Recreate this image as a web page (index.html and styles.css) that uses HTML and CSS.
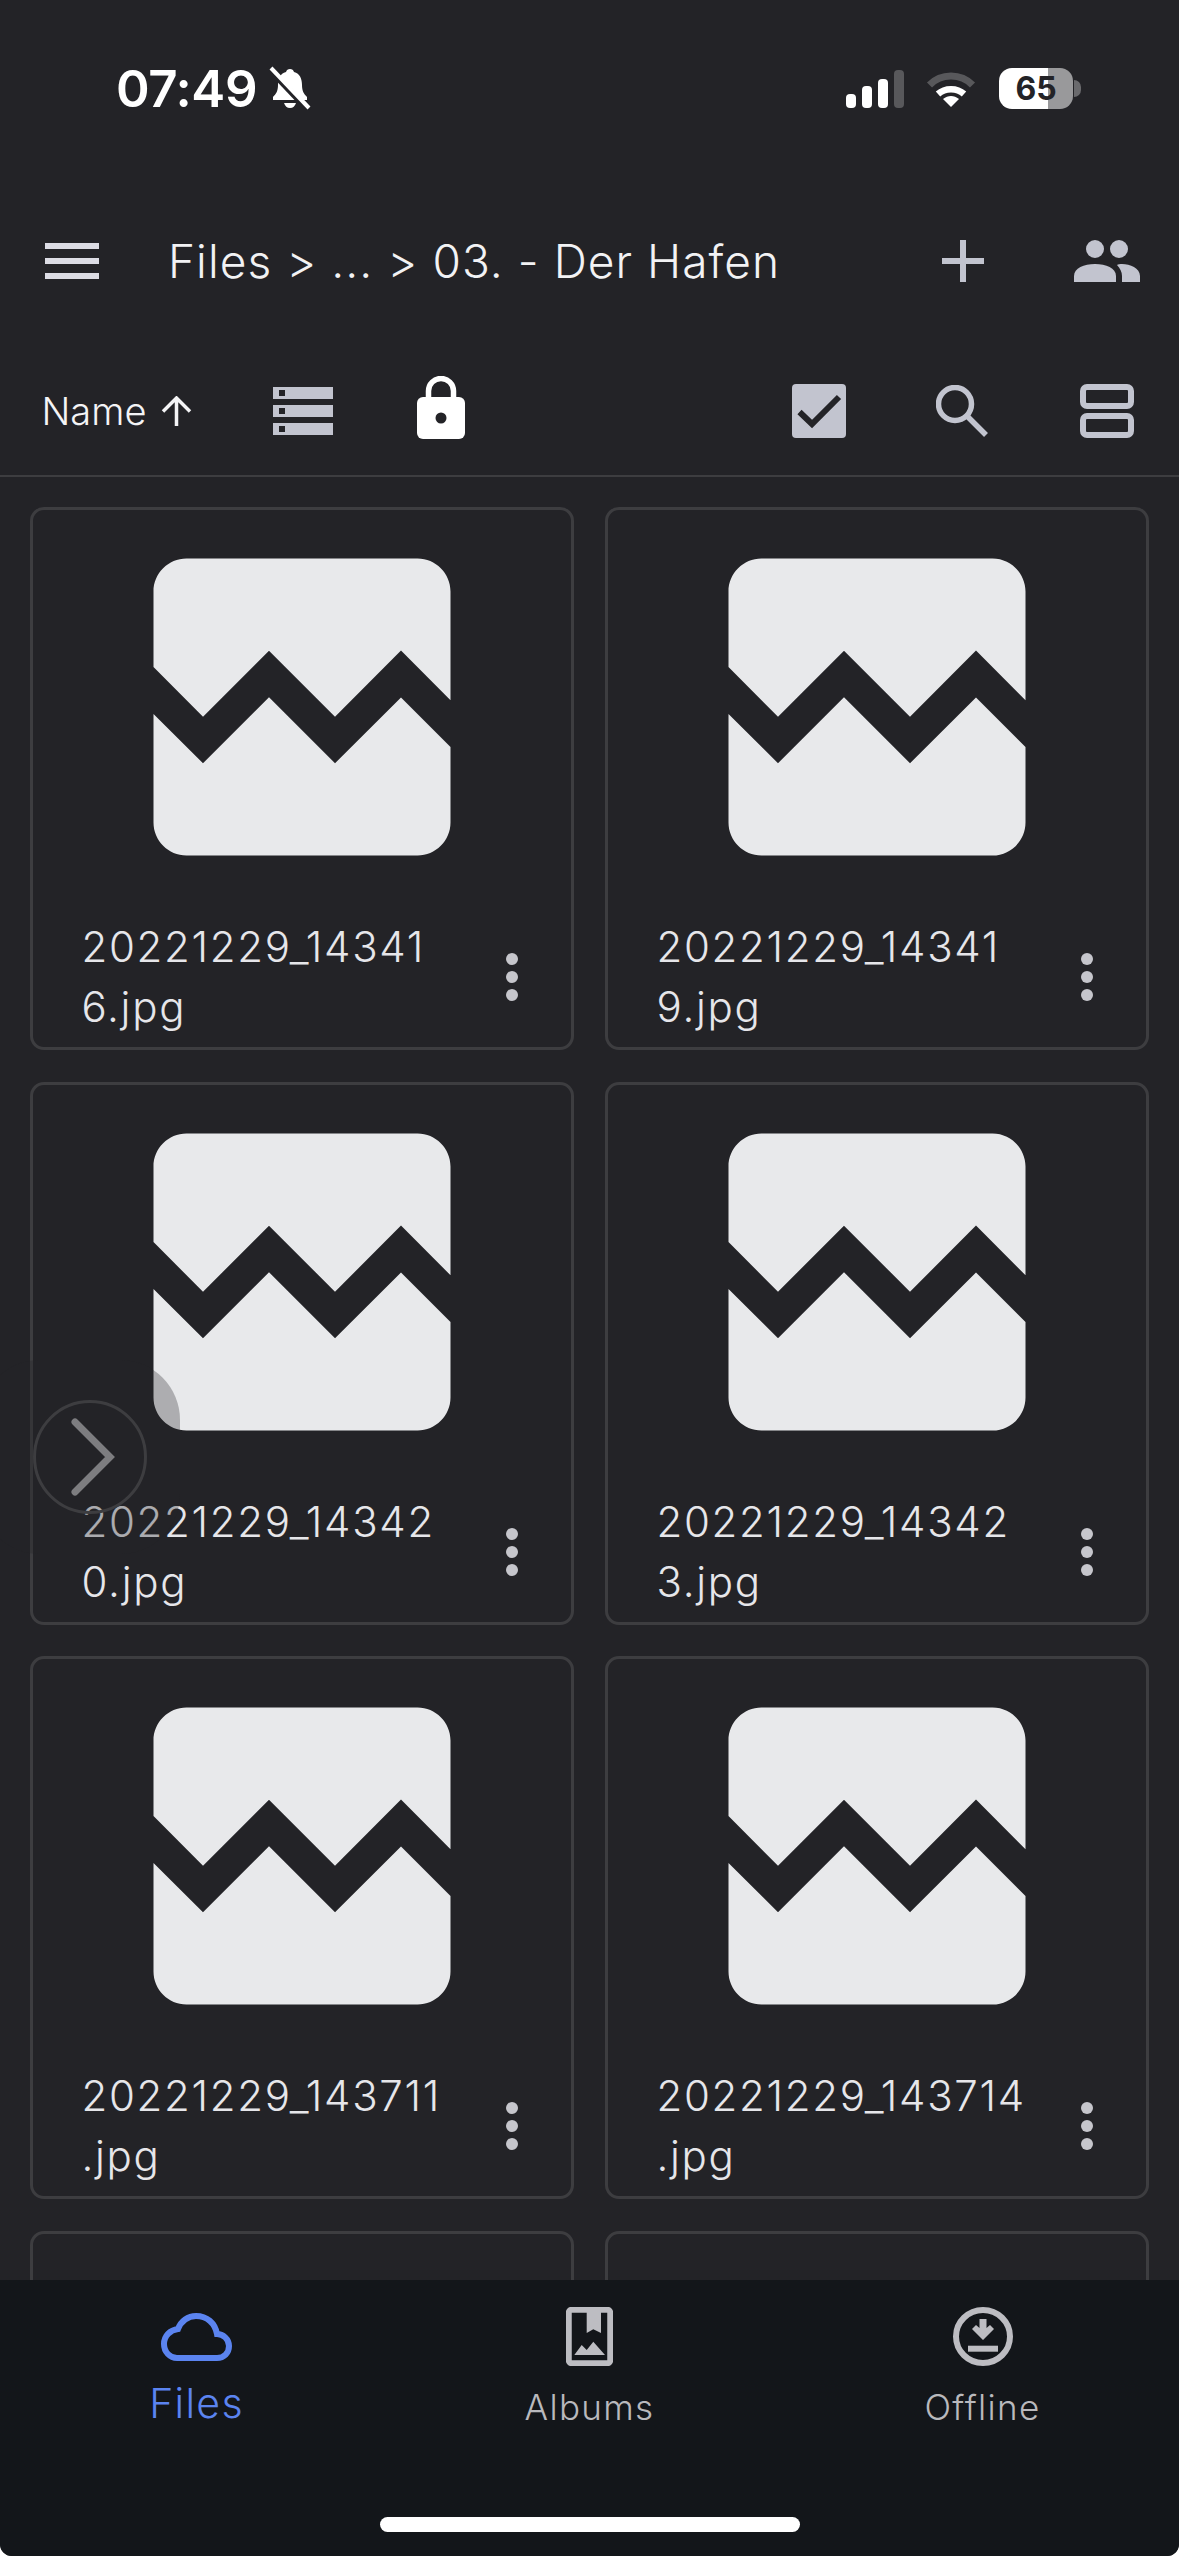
FILE: index.html
```html
<!DOCTYPE html>
<html lang="en">
<head>
<meta charset="utf-8">
<title>Files</title>
<link rel="stylesheet" href="styles.css">
</head>
<body>
<svg class="defs" width="0" height="0" aria-hidden="true">
  <symbol id="broken" viewBox="0 0 24 24"><path d="M21 5v6.59l-3-3.01-4 4.01-4-4-4 4-3-3.01V5c0-1.1.9-2 2-2h14c1.1 0 2 .9 2 2zm-3 6.42l3 3.01V19c0 1.1-.9 2-2 2H5c-1.1 0-2-.9-2-2v-6.58l3 2.99 4-4 4 4 4-3.99z"/></symbol>
</svg>
<div class="app">
  <div class="status">
    <div class="status-left">
      <span class="time">07:49</span>
      <svg class="bell" viewBox="0 0 44 46"><path class="w" d="M22 3c-2 0-3.500 1-4 3C12 7.500 10 13 10 19c0 6-2 9-5 12v3h34v-3c-3-3-5-6-5-12 0-6-2-11.500-8-13-.5-2-2-3-4-3z"/><path class="w" d="M16 37h12c-1 3-3 5-6 5s-5-2-6-5z"/><path class="cut" d="M3 5l38 40"/><path class="slash" d="M3 2l38 40"/></svg>
    </div>
    <div class="status-right">
      <svg class="signal" viewBox="0 0 58 38"><rect class="w" x="0" y="24" width="10" height="14" rx="4"/><rect class="w" x="16" y="16" width="10" height="22" rx="4"/><rect class="w" x="32" y="9" width="10" height="29" rx="4"/><rect class="dim" x="48" y="0" width="10" height="38" rx="4"/></svg>
      <svg class="wifi" viewBox="0 0 50 38"><path class="wifi-outer" d="M3.500 15C15 3 35 3 46.500 15"/><path class="wifi-mid" d="M12 24c7-6.500 19-6.500 26 0"/><path class="w" d="M25 37l-8-8c5-4 11-4 16 0z"/></svg>
      <div class="battery"><span class="battery-level">65</span><span class="battery-nub"></span></div>
    </div>
  </div>

  <div class="header">
    <div class="menu"><span></span><span></span><span></span></div>
    <div class="title">Files &gt; ... &gt; 03. - Der Hafen</div>
    <svg class="plus" viewBox="0 0 42 42"><path d="M21 0v42M0 21h42"/></svg>
    <svg class="people" viewBox="0 0 66 42"><circle cx="21" cy="9" r="9"/><circle cx="45" cy="9" r="9"/><path d="M0 42v-6c0-8 10-12 21-12s21 4 21 12v6z"/><path d="M48 42v-6c0-4-2-8-5-11 1-.6 3-1 5-1 8 0 18 4 18 12v6z"/></svg>
  </div>

  <div class="toolbar">
    <span class="sort">Name</span>
    <svg class="arrow" viewBox="0 0 31 30"><path d="M15.500 30V2M2 15.500L15.500 2 29 15.500"/></svg>
    <svg class="storage" viewBox="0 0 60 48"><path d="M0 0h60v12H0zM0 18h60v12H0zM0 36h60v12H0z"/><path class="hole" d="M6 3h6v6H6zM6 21h6v6H6zM6 39h6v6H6z"/></svg>
    <svg class="lock" viewBox="0 0 48 63"><path class="shackle" d="M11.500 24V15a12.500 12.500 0 0 1 25 0v9"/><rect class="w" x="0" y="21" width="48" height="42" rx="6"/><circle class="hole" cx="24" cy="42" r="5.500"/></svg>
    <svg class="check" viewBox="0 0 54 54"><rect width="54" height="54" rx="4"/><path class="tick" d="M7.500 28L20 40 47 13"/></svg>
    <svg class="search" viewBox="0 0 52 52"><circle cx="19" cy="19" r="16.500"/><path d="M31 31l19 19"/></svg>
    <svg class="view" viewBox="0 0 54 54"><rect x="3" y="3" width="48" height="19" rx="4"/><rect x="3" y="32" width="48" height="19" rx="4"/></svg>
  </div>

  <div class="grid">
    <div class="card"><svg class="thumb"><use href="#broken"/></svg><div class="meta"><div class="name">20221229_14341<br>6.jpg</div><div class="kebab"><span></span><span></span><span></span></div></div></div>
    <div class="card"><svg class="thumb"><use href="#broken"/></svg><div class="meta"><div class="name">20221229_14341<br>9.jpg</div><div class="kebab"><span></span><span></span><span></span></div></div></div>
    <div class="card"><svg class="thumb"><use href="#broken"/></svg><div class="meta"><div class="name">20221229_14342<br>0.jpg</div><div class="kebab"><span></span><span></span><span></span></div></div></div>
    <div class="card"><svg class="thumb"><use href="#broken"/></svg><div class="meta"><div class="name">20221229_14342<br>3.jpg</div><div class="kebab"><span></span><span></span><span></span></div></div></div>
    <div class="card"><svg class="thumb"><use href="#broken"/></svg><div class="meta"><div class="name">20221229_143711<br>.jpg</div><div class="kebab"><span></span><span></span><span></span></div></div></div>
    <div class="card"><svg class="thumb"><use href="#broken"/></svg><div class="meta"><div class="name">20221229_143714<br>.jpg</div><div class="kebab"><span></span><span></span><span></span></div></div></div>
    <div class="card"></div>
    <div class="card"></div>
  </div>

  <nav class="nav">
    <div class="tabs">
      <div class="tab tab-active">
        <svg class="cloud" viewBox="0 0 71 48"><path d="M16 45h40c7 0 12-5 12-12s-6-12-12-12C54 10 46 3 35 3c-8 0-15 5-18 13C9 17 3 23 3 31c0 8 6 14 13 14z"/></svg>
        <span class="tab-label">Files</span>
      </div>
      <div class="tab">
        <svg class="tab-icon album" viewBox="0 0 47 59"><rect class="frame" x="2.750" y="2.750" width="41.500" height="53.500" rx="3"/><path d="M20.700 4h14.300v22l-7.700-3.700-6.600 3.700z"/><path d="M8.300 48l7.400-10 5 5 6.600-8.300L39 48z"/></svg>
        <span class="tab-label">Albums</span>
      </div>
      <div class="tab">
        <svg class="tab-icon offline" viewBox="0 0 60 59"><ellipse class="frame" cx="30" cy="29.500" rx="27" ry="26.500"/><path d="M26.500 12h7v9l3.500-3 4 4-11 11-11-11 4-4 3.500 3z"/><path d="M15 38.700h30v6H15z"/></svg>
        <span class="tab-label">Offline</span>
      </div>
    </div>
    <div class="home-bar"></div>
  </nav>

  <div class="fab-shade"></div>
  <div class="fab">
    <svg class="fab-chevron" viewBox="0 0 46 80"><path d="M5 5l35 35L5 75"/></svg>
  </div>
</div>
</body>
</html>
```

FILE: styles.css
```css
* { box-sizing: border-box; }
html, body { margin: 0; padding: 0; background: #fff; }
.defs { position: absolute; }
.app {
  position: relative;
  width: 1179px;
  height: 2556px;
  display: flex;
  flex-direction: column;
  overflow: hidden;
  background: #232327;
  border-radius: 0 0 12px 12px;
  font-family: Inter, "Noto Sans", sans-serif;
  font-weight: 300;
}
svg { display: block; flex: none; }
.w { fill: #fff; }
.hole { fill: #232327; }

/* status bar */
.status {
  height: 176px;
  flex: none;
  padding: 68px 98px 0 116px;
  display: flex;
  justify-content: space-between;
  align-items: flex-start;
}
.status-left, .status-right { display: flex; align-items: center; height: 41px; }
.time { font-size: 51px; line-height: 41px; font-weight: 600; color: #fff; letter-spacing: -0.4px; }
.bell { width: 44px; height: 46px; margin-left: 11px; }
.bell .cut { stroke: #232327; stroke-width: 6; fill: none; }
.bell .slash { stroke: #fff; stroke-width: 4; fill: none; }
.signal { width: 58px; height: 38px; }
.signal .dim { fill: #58585b; }
.wifi { width: 50px; height: 38px; margin-left: 22px; }
.wifi-outer { fill: none; stroke: #58585b; stroke-width: 7; }
.wifi-mid { fill: none; stroke: #fff; stroke-width: 6.500; }
.battery {
  position: relative;
  width: 74px;
  height: 41px;
  margin: 0 8px 0 23px;
  border-radius: 13px;
  background: linear-gradient(to right, #fff 66%, #99999b 66%);
  display: flex;
  align-items: center;
  justify-content: center;
}
.battery-level { font-size: 32px; line-height: 41px; font-weight: 700; color: #232327; }
.battery-nub {
  position: absolute;
  left: 75px;
  top: 12px;
  width: 7px;
  height: 17px;
  border-radius: 0 9px 9px 0;
  background: #6a6a6d;
}

/* header */
.header {
  height: 170px;
  flex: none;
  padding: 0 39px 0 45px;
  display: flex;
  align-items: center;
}
.menu { width: 54px; height: 36px; display: flex; flex-direction: column; justify-content: space-between; flex: none; }
.menu span { height: 6px; background: #dcdce4; }
.title { margin-left: 69px; font-size: 46px; line-height: 56px; letter-spacing: 1.05px; color: #f2f2f4; white-space: nowrap; }
.plus { width: 42px; height: 42px; margin-left: auto; }
.plus path { stroke: #c2c4cf; stroke-width: 6; fill: none; }
.people { width: 66px; height: 42px; margin-left: 90px; fill: #c2c4cf; }

/* toolbar */
.toolbar {
  height: 131px;
  flex: none;
  padding: 0 45px 0 41.500px;
  display: flex;
  align-items: center;
  border-bottom: 2px solid #3d3d40;
}
.sort { font-size: 38px; line-height: 48px; color: #f4f4f6; }
.arrow { width: 31px; height: 30px; margin-left: 15px; }
.arrow path { stroke: #f4f4f6; stroke-width: 3.500; fill: none; }
.storage { width: 60px; height: 48px; margin-left: 81px; fill: #c2c4cf; }
.lock { width: 48px; height: 63px; margin-left: 84px; margin-top: -6px; }
.shackle { fill: none; stroke: #fff; stroke-width: 5.500; }
.check { width: 54px; height: 54px; margin-left: auto; fill: #c2c4cf; }
.tick { fill: none; stroke: #232327; stroke-width: 6; }
.search { width: 52px; height: 52px; margin-left: 90px; }
.search circle, .search path { fill: none; stroke: #c2c4cf; stroke-width: 5.500; }
.view { width: 54px; height: 54px; margin-left: 92px; }
.view rect { fill: none; stroke: #c2c4cf; stroke-width: 6; }

/* grid */
.grid {
  flex: 1;
  min-height: 0;
  overflow: hidden;
  padding: 30px 30px 0;
  display: grid;
  grid-template-columns: 544px 544px;
  grid-auto-rows: 543px;
  column-gap: 31px;
  row-gap: 31.500px;
  align-content: start;
}
.card {
  border: 3px solid #3d3d40;
  border-radius: 14px;
  display: flex;
  flex-direction: column;
  align-items: center;
}
.thumb { width: 396px; height: 396px; margin-top: -1px; fill: #e8e9eb; }
.meta { width: 100%; margin-top: 12px; padding: 0 53px 0 48.500px; display: flex; align-items: center; justify-content: space-between; }
.name { font-size: 42px; line-height: 60px; letter-spacing: 1.700px; color: #e6e6ea; white-space: nowrap; }
.kebab { display: flex; flex-direction: column; gap: 6px; flex: none; }
.kebab span { width: 12px; height: 12px; border-radius: 50%; background: #c6c6cc; }

/* bottom nav */
.nav { height: 276px; flex: none; background: #13161a; display: flex; flex-direction: column; }
.tabs { flex: 1; display: grid; grid-template-columns: repeat(3, 1fr); }
.tab { display: flex; flex-direction: column; align-items: center; padding-top: 27px; }
.tab-active { padding-top: 33px; }
.cloud { width: 71px; height: 48px; }
.cloud path { fill: none; stroke: #5b84f0; stroke-width: 6; }
.tab-icon { height: 59px; fill: #bdbdc2; }
.album { width: 47px; }
.offline { width: 60px; }
.frame { fill: none; stroke: #bdbdc2; stroke-width: 6; }
.tab-label { margin-top: 21px; font-size: 35px; line-height: 40px; letter-spacing: 1.300px; color: #b9b9bd; }
.tab-active .tab-label { margin-top: 22px; font-size: 41px; letter-spacing: 1.300px; color: #5b84f0; }
.home-bar { width: 420px; height: 15px; margin: 0 auto 24px; border-radius: 8px; background: #fff; flex: none; }

/* floating drawer handle */
.fab-shade {
  position: absolute;
  left: -20px;
  top: 1360px;
  width: 200px;
  height: 194px;
  border-radius: 60px;
  background: rgba(35, 35, 39, 0.3);
}
.fab {
  position: absolute;
  left: 33px;
  top: 1400px;
  width: 114px;
  height: 114px;
  border-radius: 50%;
  border: 3px solid #3d3d40;
  display: flex;
  align-items: center;
  justify-content: center;
}
.fab-chevron { width: 46px; height: 80px; margin-left: 6px; }
.fab-chevron path { fill: none; stroke: #7d7d80; stroke-width: 7; stroke-linecap: round; stroke-linejoin: miter; }
```
